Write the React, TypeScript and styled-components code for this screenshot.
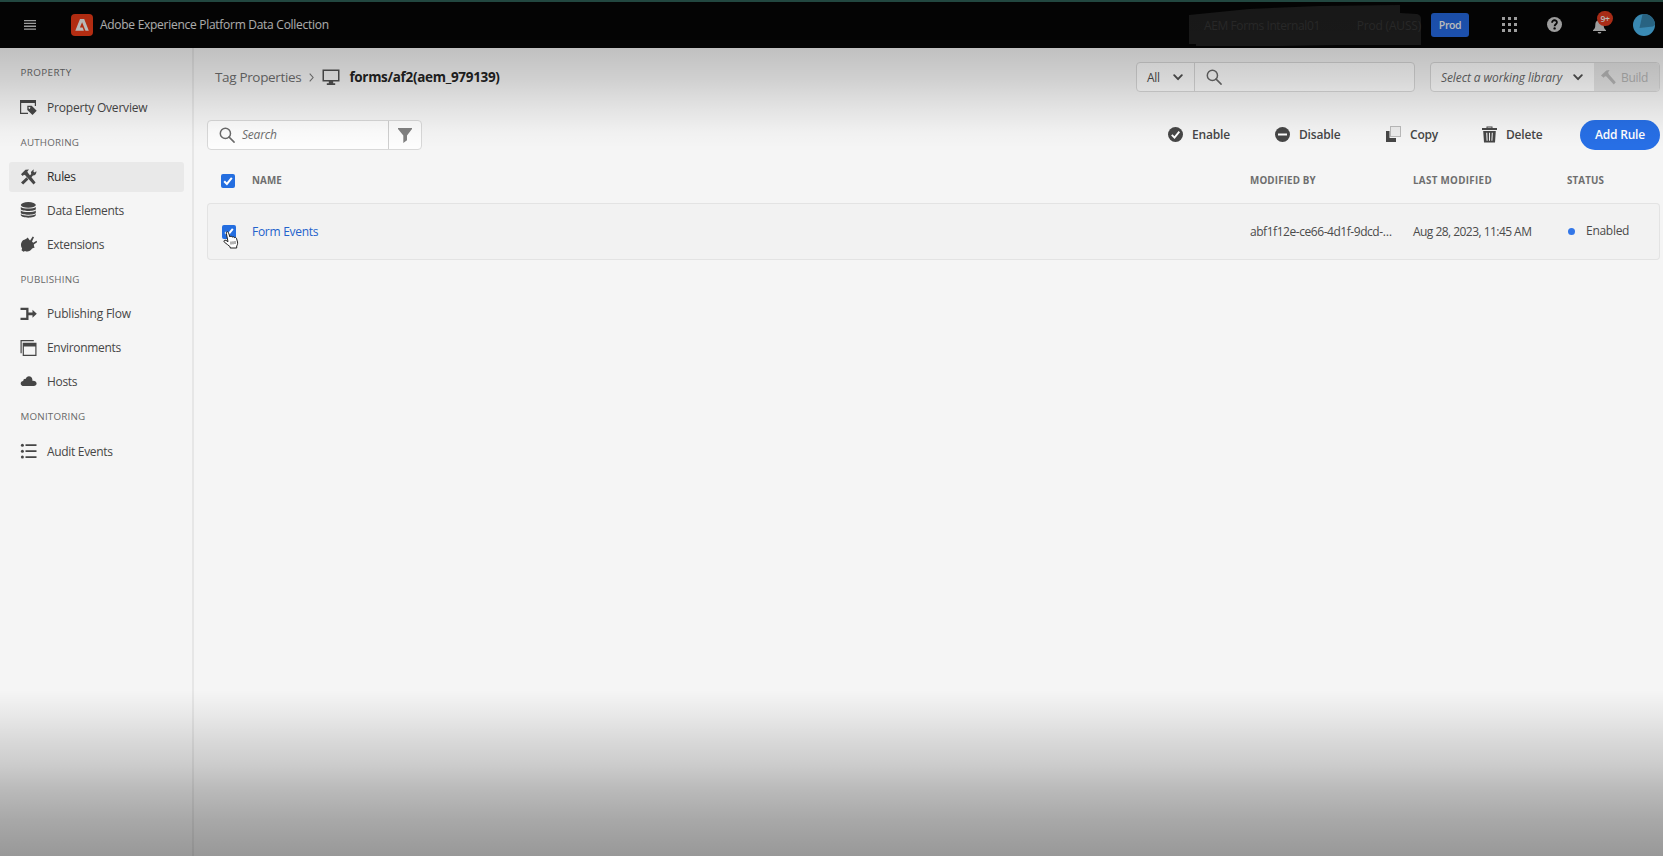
import React from 'react';
import styled, { createGlobalStyle } from 'styled-components';

const GlobalStyle = createGlobalStyle`
  * { box-sizing: border-box; }
  html, body { margin: 0; height: 100%; overflow: hidden; }
  body { font-family: "Open Sans", "Noto Sans", sans-serif; font-size: 12px; color: #4b4b4b; background: #f5f5f5; }
  svg { display: block; flex: none; }
`;

const Page = styled.div`
  position: relative;
  display: flex;
  flex-direction: column;
  width: 1663px;
  height: 856px;
  overflow: hidden;
  background: #f5f5f5;
`;

const Vignette = styled.div`
  position: absolute;
  inset: 0;
  pointer-events: none;
  background:
    linear-gradient(to bottom, rgba(0,0,0,.27) 0, rgba(0,0,0,.21) 50px, rgba(0,0,0,.15) 80px, rgba(0,0,0,.075) 108px, rgba(0,0,0,.02) 132px, transparent 148px),
    linear-gradient(to top, rgba(0,0,0,.38) 0, rgba(0,0,0,.315) 36px, rgba(0,0,0,.245) 66px, rgba(0,0,0,.17) 91px, rgba(0,0,0,.115) 116px, rgba(0,0,0,.055) 140px, transparent 166px);
`;

const Label = styled.span<{ $track?: number }>`
  letter-spacing: ${p => p.$track ?? -0.28}px;
  white-space: nowrap;
`;

/* top bar */
const Header = styled.header`
  display: flex;
  align-items: center;
  flex: none;
  height: 48px;
  padding: 0 8px 1px 24px;
  background: #050505;
  border-top: 2px solid #2e6157;
  color: #e2e2e2;
`;
const Logo = styled.div`
  display: grid;
  place-items: center;
  width: 22px;
  height: 22px;
  margin-left: 35px;
  border-radius: 4px;
  background: #ea3a17;
`;
const ProductName = styled(Label)`margin: 0 0 0 7px;`;
const OrgSwitcher = styled.div`
  position: relative;
  width: 232px;
  height: 42px;
  margin: 0 10px 0 auto;
`;
const Scribble = styled.svg`position: absolute; inset: 0;`;
const OrgText = styled.div`
  position: relative;
  display: flex;
  justify-content: space-between;
  align-items: center;
  height: 100%;
  padding: 2px 0 0 15px;
  color: #343434;
`;
const EnvBadge = styled.div`
  display: grid;
  place-items: center;
  width: 38px;
  height: 24px;
  border-radius: 3px;
  background: #2468e0;
  color: #f6f6f6;
  font-size: 10.5px;
  font-weight: 600;
`;
const AppsIcon = styled.div`
  display: grid;
  grid-template-columns: repeat(3, 3px);
  grid-auto-rows: 3px;
  gap: 3px;
  margin: 0 30px 1px 33px;
`;
const AppDot = styled.i`background: #cfcfcf;`;
const BellWrap = styled.div`position: relative; margin: 3px 27px 0 31px;`;
const Count = styled.span`
  position: absolute;
  left: 4px;
  top: -8px;
  display: grid;
  place-items: center;
  width: 16px;
  height: 15px;
  border-radius: 8px;
  background: #e03a1e;
  color: #f4f4f4;
  font-size: 8.5px;
  font-weight: 600;
  letter-spacing: -0.3px;
`;

/* body */
const Body = styled.div`display: flex; flex: 1;`;
const Sidebar = styled.nav`
  width: 194px;
  padding: 15px 8px 0 9px;
  border-right: 2px solid #e6e6e6;
`;
const Section = styled.section`margin-bottom: 10.3px;`;
const SectionTitle = styled.h2<{ $track?: number }>`
  margin: 0 0 9.5px;
  padding-left: 11.5px;
  font-size: 9.8px;
  font-weight: 400;
  line-height: 20px;
  letter-spacing: ${p => p.$track ?? 0.2}px;
  color: #686868;
`;
const Items = styled.div`display: flex; flex-direction: column; gap: 3.7px;`;
const Item = styled.a<{ $active?: boolean }>`
  display: flex;
  align-items: center;
  gap: 10px;
  height: 30px;
  padding: 0 0 1px 11px;
  border-radius: 3px;
  color: ${p => (p.$active ? '#2c2c2c' : '#464646')};
  background: ${p => (p.$active ? '#e9e9e9' : 'transparent')};
`;

const Main = styled.main`flex: 1; padding: 14px 3px 0 13px;`;
const TopRow = styled.div`display: flex; align-items: center; height: 30px; margin-bottom: 28px;`;
const Crumbs = styled.div`
  display: flex;
  align-items: center;
  padding-left: 8px;
  font-size: 13.5px;
  color: #6e6e6e;
`;
const Chevron = styled.svg`margin: 1px 8px 0 8px;`;
const PropertyName = styled(Label)`margin-left: 9px; font-weight: 700; color: #232323;`;
const Field = styled.div<{ $w: number }>`
  display: flex;
  width: ${p => p.$w}px;
  height: 30px;
  border: 1px solid #d8d8d8;
  border-radius: 4px;
  background: #fdfdfd;
  overflow: hidden;
`;
const GlobalSearch = styled(Field)`margin-left: auto; margin-right: 15px;`;
const ScopePicker = styled.div`
  display: flex;
  align-items: center;
  justify-content: space-between;
  width: 58px;
  padding: 0 11px 0 10px;
  border-right: 1px solid #d8d8d8;
`;
const SearchSlot = styled.div`
  display: flex;
  align-items: center;
  flex: 1;
  gap: 7px;
  padding: 0 0 1px 11px;
  font-style: italic;
  color: #6e6e6e;
`;
const LibraryPicker = styled.div`
  display: flex;
  align-items: center;
  justify-content: space-between;
  width: 163px;
  padding: 0 11px 0 10px;
  font-style: italic;
  color: #666;
`;
const BuildButton = styled.div`
  display: flex;
  align-items: center;
  gap: 5px;
  flex: 1;
  padding-left: 7px;
  background: #e6e6e6;
  color: #b4b4b4;
`;
const FilterButton = styled.div`
  display: grid;
  place-items: center;
  width: 33px;
  border-left: 1px solid #cfcfcf;
`;

const Toolbar = styled.div`display: flex; align-items: center; height: 30px;`;
const Actions = styled.div`display: flex; align-items: center; margin-left: auto;`;
const Action = styled.button<{ $w: number }>`
  display: flex;
  align-items: center;
  gap: 9px;
  width: ${p => p.$w}px;
  padding: 0 0 2px;
  border: 0;
  background: none;
  font: 600 12px "Open Sans", sans-serif;
  color: #464646;
`;
const PrimaryButton = styled.button`
  width: 80px;
  height: 30px;
  padding: 0 0 2px;
  border: 0;
  border-radius: 15px;
  background: #276fe6;
  color: #fff;
  font: 600 12px "Open Sans", sans-serif;
`;

const GridRow = styled.div`
  display: grid;
  grid-template-columns: 45px 998px 163px 154px 1fr;
  align-items: center;
`;
const HeadRow = styled(GridRow)`
  height: 53px;
  padding-top: 8px;
  font-size: 9.8px;
  font-weight: 700;
  color: #6e6e6e;
`;
const DataRow = styled(GridRow)`
  height: 57px;
  border-radius: 4px;
  background: #f2f2f2;
  box-shadow: inset 0 0 0 1px #e3e3e3;
`;
const RuleLink = styled(Label)`color: #2362cc;`;
const Status = styled.div`display: flex; align-items: center; gap: 11px; padding: 0 0 2px 1px;`;
const Dot = styled.i`width: 7px; height: 7px; margin-top: 2px; border-radius: 50%; background: #3377e8;`;
const CheckCell = styled.div<{ $shift?: number }>`position: relative; padding-left: ${p => 14 + (p.$shift ?? 0)}px;`;
const Pointer = styled.svg`position: absolute; left: 16px; top: 6px;`;

const Check = () => (
  <svg width="14" height="14" viewBox="0 0 14 14">
    <rect width="14" height="14" rx="2" fill="#246ee0" />
    <path d="M3.2 7.2 5.9 10 10.8 3.9" fill="none" stroke="#fff" strokeWidth="2" />
  </svg>
);
const Magnifier = ({ color = '#6a6a6a' }) => (
  <svg width="16" height="16" viewBox="0 0 16 16" fill="none" stroke={color} strokeWidth="1.5">
    <circle cx="6.4" cy="6.4" r="5.1" /><path d="m10.1 10.1 5 5" strokeLinecap="round" />
  </svg>
);
const Down = () => (
  <svg width="10" height="7" viewBox="0 0 10 7" fill="none" stroke="#505050" strokeWidth="1.9" strokeLinecap="round" strokeLinejoin="round">
    <path d="m1.2 1.2 3.8 4 3.8-4" />
  </svg>
);
const Icon = ({ children }: { children: React.ReactNode }) => (
  <svg width="17" height="16" viewBox="0 0 17 16" fill="#464646">{children}</svg>
);

const icons = {
  overview: <Icon><path d="M0 1h16v6h-1.2V4H1.2v9.800H8V15H0z" /><path d="M7.300 6.800h4.400l5 5-4.200 4.200-5.200-4.900zM9.400 8a.9.900 0 1 0 .01 0z" fillRule="evenodd" /></Icon>,
  rules: <Icon><path d="M1 5.200 5.400.8 9 .6 7.300 2.500l.6 1.200L15.600 13.400 13.500 15.600 5.200 6.300 4 5.800 2.700 7z" /><path d="M1 13.600 6.500 8.300l1.900 2.100L3.200 15.600zM9.200 7.200l2-2.200-.3-2L13.700.3 13.500 2.700l1.400.9L16.300 2c.5 2.700-1 4.500-3.300 4.500L10.700 8.900z" /></Icon>,
  data: <Icon><ellipse cx="8.300" cy="2.900" rx="7.500" ry="2.800" /><path d="M.8 4.900c2 2.100 13 2.100 15 0v2.400c-1.200 2.300-13.800 2.300-15 0zM.8 8.400c2 2.200 13 2.200 15 0v2.600c-1.200 2.300-13.800 2.300-15 0zM.8 12.100c2 2.200 13 2.200 15 0v1.200c-1.200 3.200-13.800 3.200-15 0z" /></Icon>,
  extensions: <Icon><path d="M2.500 4.800C3.800 3.400 5 4 6.300 2.800L7.800 1.400 8.900 3.300l1.200 1.100 2.600-4 1.300.9L12 5.600l1.200 1.200 3.300-2 .7 1.300-3.400 2.300.3 2.100.6 1-2.600 1c-1.600 2.800-5 3.800-7 2.400l-1.700.9-1.900-1.500.6-1.900C.3 9.900.8 6.800 2.500 4.800z" /></Icon>,
  flow: <Icon><path d="M.5 1.800h8v4.700h4V3.800L16.800 7.800l-4.300 4V9.200h-4v4.700h-8v-2.200h5.700V4H.5z" /></Icon>,
  environments: <Icon><path d="M.5 0h13.300v1.200H1.700v12H.5zM2.700 2.700h13.800V16H2.700zm1.200 3.800v8.300h11.400V6.500z" fillRule="evenodd" /></Icon>,
  hosts: <Icon><path d="M4 13C1.700 13 .7 11.700.7 10.400c0-1.500 1-2.400 2.500-2.500C3.400 6.300 4.400 5.600 5.800 5.900c.7-3.500 6-3.500 6.600.5 0 .5 0 .9-.1 1.300 2.500-.3 4.300.9 4.300 2.800 0 1.500-1.200 2.500-2.800 2.500z" /></Icon>,
  audit: <Icon><circle cx="2.400" cy="2.200" r="1.500" /><circle cx="2.400" cy="8.200" r="1.500" /><circle cx="2.400" cy="14.100" r="1.500" /><path d="M5.500 1.300h11v1.800h-11zM5.500 7.300h11v1.800h-11zM5.500 13.200h11V15h-11z" /></Icon>,
};

const nav = [
  { title: 'PROPERTY', track: 0.4, items: [{ icon: icons.overview, text: 'Property Overview', track: -0.2 }] },
  { title: 'AUTHORING', items: [
    { icon: icons.rules, text: 'Rules', active: true },
    { icon: icons.data, text: 'Data Elements' },
    { icon: icons.extensions, text: 'Extensions' },
  ] },
  { title: 'PUBLISHING', items: [
    { icon: icons.flow, text: 'Publishing Flow', track: -0.2 },
    { icon: icons.environments, text: 'Environments' },
    { icon: icons.hosts, text: 'Hosts' },
  ] },
  { title: 'MONITORING', items: [{ icon: icons.audit, text: 'Audit Events' }] },
] as { title: string; track?: number; items: { icon: React.ReactNode; text: string; active?: boolean; track?: number }[] }[];

export default function App() {
  return (
    <Page>
      <GlobalStyle />
      <Header>
        <svg width="12" height="10" viewBox="0 0 12 10" fill="#cfcfcf">
          <path d="M0 0h12v1.300H0zM0 2.800h12v1.300H0zM0 5.600h12v1.300H0zM0 8.400h12v1.300H0z" />
        </svg>
        <Logo>
          <svg width="14" height="14" viewBox="0 0 14 14" fill="#f2f2f2">
            <path d="M5 1h4.200l4.600 11.800h-3.300L7.100 4.300 4.900 9.500h2.700l1.300 3.300H.3z" />
          </svg>
        </Logo>
        <ProductName>Adobe Experience Platform Data Collection</ProductName>
        <OrgSwitcher>
          <Scribble width="232" height="42" viewBox="0 0 232 42">
            <path d="M0 11 60 5 130 2 211 1v8l17 1q4 1 4 5v26H150L90 42 7 43v-3H0z" fill="#202020" />
          </Scribble>
          <OrgText><Label $track={-0.4}>AEM Forms Internal01</Label><Label $track={-0.2}>Prod (AUSS)</Label></OrgText>
        </OrgSwitcher>
        <EnvBadge><Label $track={-0.4}>Prod</Label></EnvBadge>
        <AppsIcon>{Array.from({ length: 9 }, (_, i) => <AppDot key={i} />)}</AppsIcon>
        <svg width="15" height="15" viewBox="0 0 15 15">
          <circle cx="7.500" cy="7.500" r="7.500" fill="#cfcfcf" />
          <path d="M5.100 5.700C5 2.500 9.900 2.500 9.900 5.400 9.900 7.200 7.600 7.200 7.600 9.200" fill="none" stroke="#0a0a0a" strokeWidth="1.800" />
          <circle cx="7.600" cy="11.400" r="1.200" fill="#0a0a0a" />
        </svg>
        <BellWrap>
          <svg width="13" height="15" viewBox="0 0 13 15" fill="#cfcfcf">
            <path d="M6.500 0c1 0 1.300.7 1.300 1.300C10 2 10.700 3.800 10.700 6c0 3 .8 4 2.300 5.200V12H0v-.8C1.500 10 2.300 9 2.300 6 2.300 3.800 3 2 5.200 1.300 5.200.7 5.500 0 6.500 0zM4.700 13h3.600c-.3 2-3.300 2-3.600 0z" />
          </svg>
          <Count>9+</Count>
        </BellWrap>
        <svg width="22" height="22" viewBox="0 0 22 22">
          <circle cx="11" cy="11" r="11" fill="#4bb4ea" />
          <path d="M9.600 0A11 11 0 0 1 22 11l-2 1.500L6.500 14z" fill="#3583ab" />
        </svg>
      </Header>

      <Body>
        <Sidebar>
          {nav.map(s => (
            <Section key={s.title}>
              <SectionTitle $track={s.track}>{s.title}</SectionTitle>
              <Items>
                {s.items.map(i => (
                  <Item key={i.text} $active={i.active}>{i.icon}<Label $track={i.track ?? -0.32}>{i.text}</Label></Item>
                ))}
              </Items>
            </Section>
          ))}
        </Sidebar>

        <Main>
          <TopRow>
            <Crumbs>
              <Label $track={-0.34}>Tag Properties</Label>
              <Chevron width="5" height="9" viewBox="0 0 5 9" fill="none" stroke="#777" strokeWidth="1.100"><path d="m.7.700 3.400 3.800L.7 8.300" /></Chevron>
              <svg width="18" height="17" viewBox="0 0 18 17" fill="#505050">
                <path d="M.5.500h17v12h-6.300v1.800h2V16H4.800v-1.700h2v-1.800H.5zm1.500 1.500v9h14V2z" fillRule="evenodd" />
              </svg>
              <PropertyName $track={-0.31}>forms/af2(aem_979139)</PropertyName>
            </Crumbs>
            <GlobalSearch $w={279}>
              <ScopePicker><Label>All</Label><Down /></ScopePicker>
              <SearchSlot><Magnifier /></SearchSlot>
            </GlobalSearch>
            <Field $w={230}>
              <LibraryPicker><Label $track={-0.1}>Select a working library</Label><Down /></LibraryPicker>
              <BuildButton>
                <svg width="15" height="15" viewBox="0 0 15 15" fill="#b8b8b8"><path d="M0 5.600 5.300.6 8.600 0 7.200 2.300 7.600 4l7.200 8.300-2 2.200L5.400 6.400 4 6.200 2.600 7.800z" /></svg>
                <Label>Build</Label>
              </BuildButton>
            </Field>
          </TopRow>

          <Toolbar>
            <Field $w={215}>
              <SearchSlot><Magnifier /><Label $track={-0.2}>Search</Label></SearchSlot>
              <FilterButton>
                <svg width="14" height="15" viewBox="0 0 14 15" fill="#808080"><path d="M0 0h14v1L9 7.500v4.700L5.300 15V7.500L0 1z" /></svg>
              </FilterButton>
            </Field>
            <Actions>
              <Action $w={107}>
                <svg width="15" height="15" viewBox="0 0 15 15"><circle cx="7.500" cy="7.500" r="7.500" fill="#464646" /><path d="m3.800 7.800 2.700 2.800 4.800-6" fill="none" stroke="#fff" strokeWidth="1.900" /></svg>
                <Label $track={-0.17}>Enable</Label>
              </Action>
              <Action $w={111}>
                <svg width="15" height="15" viewBox="0 0 15 15"><circle cx="7.500" cy="7.500" r="7.500" fill="#464646" /><path d="M3 7.500h9" stroke="#fff" strokeWidth="2" /></svg>
                <Label $track={-0.17}>Disable</Label>
              </Action>
              <Action $w={96}>
                <svg width="15" height="16" viewBox="0 0 15 16"><path d="M0 5h3.500v7H10v4H0z" fill="#464646" /><rect x="4.500" y=".5" width="10" height="10" fill="#ececec" stroke="#858585" strokeDasharray="1 1" /></svg>
                <Label $track={-0.2}>Copy</Label>
              </Action>
              <Action $w={98}>
                <svg width="15" height="17" viewBox="0 0 15 17" fill="#464646"><path d="M4.500 2V.5h6V2H15v2H0V2zm1 0h4v-.6h-4zM1.200 5h12.600L13 16.500H2zm3 1.800.4 8h1l-.3-8zm2.800 0v8h1v-8zm2.800 0-.4 8h1l.4-8z" fillRule="evenodd" /></svg>
                <Label $track={-0.2}>Delete</Label>
              </Action>
              <PrimaryButton><Label $track={-0.2}>Add Rule</Label></PrimaryButton>
            </Actions>
          </Toolbar>

          <HeadRow>
            <CheckCell><Check /></CheckCell>
            <Label $track={0.1}>NAME</Label>
            <Label $track={0.15}>MODIFIED BY</Label>
            <Label $track={0.32}>LAST MODIFIED</Label>
            <Label $track={0.1}>STATUS</Label>
          </HeadRow>
          <DataRow>
            <CheckCell $shift={1}>
              <Check />
              <Pointer width="16" height="18" viewBox="0 0 16 18" fill="#fff" stroke="#222" strokeWidth="1" strokeLinejoin="round">
                <path d="M3.300 2.200C3 .5 5 .2 5.500 1.600L6.900 6c.6-1.200 2-.9 2.300.2.700-.9 1.900-.6 2.200.5.900-.6 2-.1 2.200 1l.9 3.300c.4 1.800-.2 3-.8 4v2H7.200v-1.200C5.300 14.500 3.600 12.600 1.200 11 .4 10 1.600 8.600 3 9.400l2 1.300z" />
                <path d="M8 10.500v3M10 10.300v3M12 10v3" strokeWidth=".7" />
              </Pointer>
            </CheckCell>
            <RuleLink>Form Events</RuleLink>
            <Label $track={-0.45}>abf1f12e-ce66-4d1f-9dcd-…</Label>
            <Label $track={-0.54}>Aug 28, 2023, 11:45 AM</Label>
            <Status><Dot /><Label>Enabled</Label></Status>
          </DataRow>
        </Main>
      </Body>
      <Vignette />
    </Page>
  );
}
